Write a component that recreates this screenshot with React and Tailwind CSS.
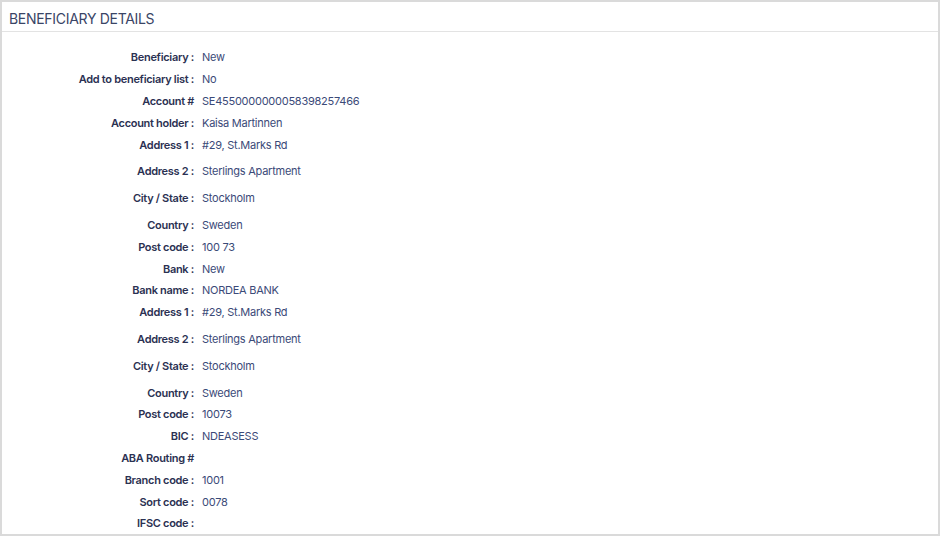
const rows = [
  { label: "Beneficiary :", value: "New" },
  { label: "Add to beneficiary list :", value: "No" },
  { label: "Account #", value: "SE4550000000058398257466" },
  { label: "Account holder :", value: "Kaisa Martinnen" },
  { label: "Address 1 :", value: "#29, St.Marks Rd" },
  { label: "Address 2 :", value: "Sterlings Apartment", tall: true },
  { label: "City / State :", value: "Stockholm", tall: true },
  { label: "Country :", value: "Sweden", tall: true },
  { label: "Post code :", value: "100 73" },
  { label: "Bank :", value: "New" },
  { label: "Bank name :", value: "NORDEA BANK" },
  { label: "Address 1 :", value: "#29, St.Marks Rd" },
  { label: "Address 2 :", value: "Sterlings Apartment", tall: true },
  { label: "City / State :", value: "Stockholm", tall: true },
  { label: "Country :", value: "Sweden", tall: true },
  { label: "Post code :", value: "10073" },
  { label: "BIC :", value: "NDEASESS" },
  { label: "ABA Routing #", value: "" },
  { label: "Branch code :", value: "1001" },
  { label: "Sort code :", value: "0078" },
  { label: "IFSC code :", value: "" },
];

function DetailRow({ label, value, tall }) {
  return (
    <div className={`flex items-center h-[21.8px] ${tall ? "mt-[5px]" : ""}`}>
      <span className="w-[192px] shrink-0 text-right font-semibold text-[#2b3152] tracking-[-0.3px]">
        {label}
      </span>
      <span className="pl-[8px] text-[#3b4a78] tracking-[-0.25px]">{value}</span>
    </div>
  );
}

export default function App() {
  return (
    <div
      className="w-[940px] h-[536px] bg-white border-2 border-[#dadada] overflow-hidden"
      style={{ fontFamily: "Inter, 'Noto Sans', sans-serif" }}
    >
      {/* Header */}
      <div className="h-[30px] flex items-center pt-[5px] px-[7px] border-b border-[#e3e3e3]">
        <h2 className="text-[14px] leading-none text-[#3a4566] tracking-[-0.3px]">BENEFICIARY DETAILS</h2>
      </div>

      {/* Details list */}
      <div className="pt-[15px] text-[11px] leading-none flex flex-col">
        {rows.map((r, i) => (
          <DetailRow key={i} {...r} />
        ))}
      </div>
    </div>
  );
}
